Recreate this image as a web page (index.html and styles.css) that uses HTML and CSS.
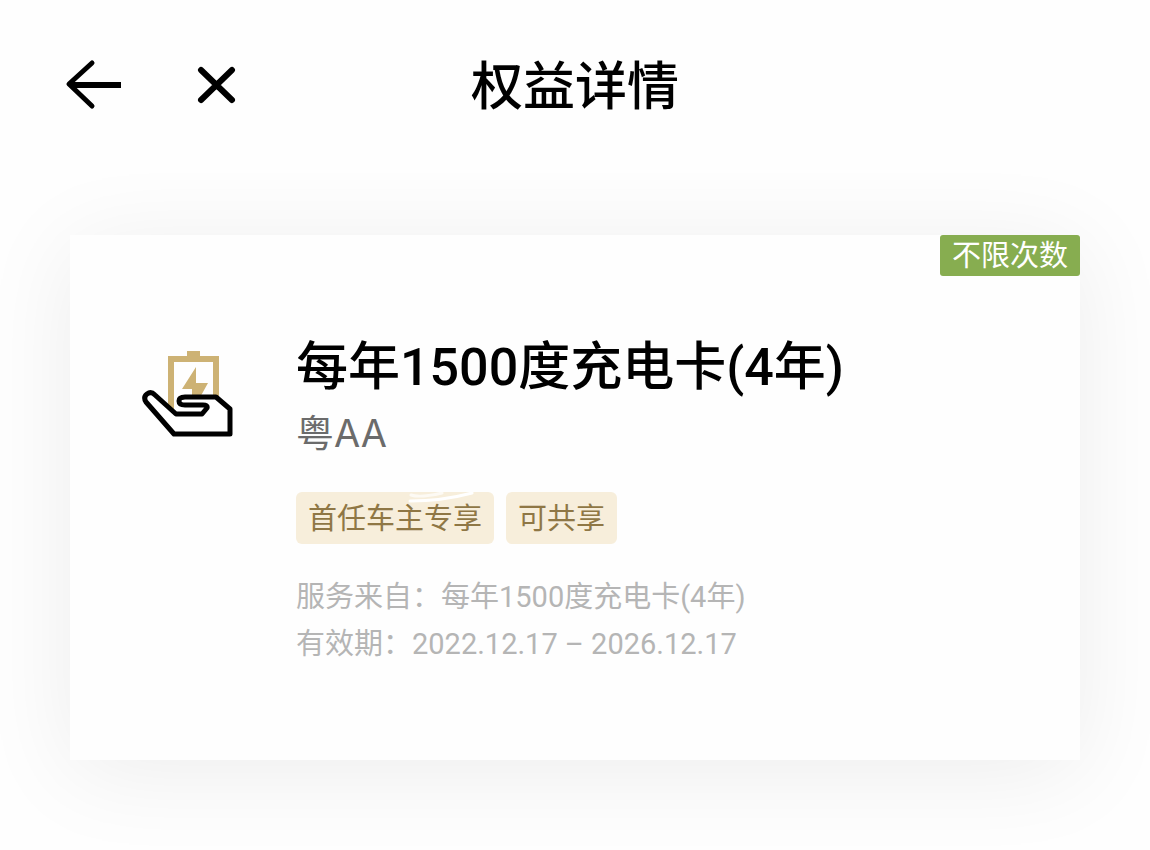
FILE: index.html
```html
<!DOCTYPE html>
<html lang="zh-CN">
<head>
    <meta charset="UTF-8">
    <meta name="viewport" content="width=device-width, initial-scale=1.0">
    <title>权益详情</title>
    <link rel="stylesheet" href="styles.css">
</head>
<body>
    <header class="navbar">
        <div class="nav-actions">
            <button type="button" class="nav-button" aria-label="返回">
                <svg width="60" height="52" viewBox="0 0 60 52" fill="none" stroke="#000" stroke-width="5" stroke-linejoin="round" stroke-linecap="round">
                    <path d="M28 4 L5 25 L28 47"/>
                    <path d="M7 26 H57" stroke-width="6" stroke-linecap="butt"/>
                </svg>
            </button>
            <button type="button" class="nav-button" aria-label="关闭">
                <svg width="40" height="40" viewBox="0 0 40 40" fill="none" stroke="#000" stroke-width="6" stroke-linecap="round">
                    <path d="M5 5 L36 35 M36 5 L5 35"/>
                </svg>
            </button>
        </div>
        <h1 class="nav-title">权益详情</h1>
    </header>

    <main class="content">
        <article class="card">
            <span class="badge">不限次数</span>
            <svg class="card-icon" width="92" height="90" viewBox="0 0 92 90" fill="none">
                <path d="M29 62 V8 H74 V54" stroke="#cdb274" stroke-width="6"/>
                <path d="M45 0 H58 V8 H45 Z" fill="#cdb274"/>
                <path d="M54 16 L40 38 H50 V50 H56 L66 32 H54 Z" fill="#cdb274"/>
                <path d="M34 63 H60 L65 57 Q66 54 61 54 H43 Q37 54 37 50 Q37 46 43 46 H74 L88 58 V83 H32 L4 51 Q1 46 5 43 Q9 40 13 44 L34 63 Z" fill="#fff" stroke="#000" stroke-width="5" stroke-linejoin="round"/>
            </svg>
            <div class="card-body">
                <h2 class="card-title">每年1500度充电卡(4年)</h2>
                <p class="plate">粤AA</p>
                <div class="tags">
                    <span class="tag">首任车主专享
                        <svg class="tag-stroke" width="70" height="12" viewBox="0 0 70 12" fill="none" stroke="#fff" stroke-linecap="round">
                            <path d="M3 3 Q12 6 34 1" stroke-width="3" opacity="0.7"/>
                            <path d="M2 9 Q34 9 64 1" stroke-width="3"/>
                        </svg>
                    </span>
                    <span class="tag">可共享</span>
                </div>
                <p class="info">服务来自：每年1500度充电卡(4年)</p>
                <p class="info">有效期：2022.12.17 – 2026.12.17</p>
            </div>
        </article>
    </main>
</body>
</html>
```
FILE: styles.css
```css
* {
    margin: 0;
    padding: 0;
    box-sizing: border-box;
}

body {
    font-family: Roboto, "Noto Sans CJK SC", sans-serif;
    background: #fefefe;
    color: #000;
}

.navbar {
    display: grid;
    grid-template-columns: 1fr auto 1fr;
    align-items: center;
    padding: 44px 64px 0;
}

.nav-actions {
    display: flex;
    align-items: center;
    gap: 72px;
}

.nav-button {
    display: flex;
    border: none;
    background: none;
    cursor: pointer;
}

.nav-title {
    padding-top: 6px;
    font-size: 52px;
    line-height: 76px;
    font-weight: 500;
}

.content {
    padding: 109px 70px 88px;
}

.card {
    position: relative;
    display: flex;
    align-items: flex-start;
    gap: 62px;
    padding: 98px 72px 92px;
    background: #fefefe;
    box-shadow: 0 12px 90px rgba(0, 0, 0, 0.07);
}

.badge {
    position: absolute;
    top: 0;
    right: 0;
    padding: 2px 12px 0;
    border-radius: 3px;
    background: #87ad50;
    color: #fff;
    font-size: 29px;
    line-height: 39px;
}

.card-icon {
    flex: none;
    margin-top: 18px;
}

.card-title {
    font-size: 52px;
    line-height: 70px;
    font-weight: 500;
}

.plate {
    color: #6b6b6b;
    font-family: Inter, "Noto Sans CJK SC", sans-serif;
    font-size: 38px;
    line-height: 60px;
}

.tags {
    display: flex;
    gap: 12px;
    margin: 29px 0 30px;
}

.tag {
    position: relative;
    padding: 2px 12px 0;
    border-radius: 6px;
    background: #f7eedb;
    color: #8f7745;
    font-size: 29px;
    line-height: 50px;
}

.tag-stroke {
    position: absolute;
    top: 0;
    right: 16px;
}

.info {
    color: #b5b5b5;
    font-size: 29px;
    line-height: 47px;
}
```
